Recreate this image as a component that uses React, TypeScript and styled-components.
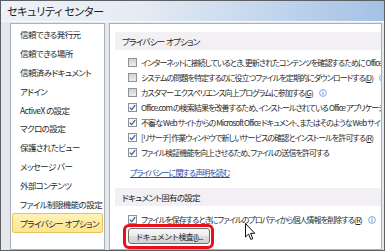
import React from 'react';
import styled, { createGlobalStyle, css } from 'styled-components';

const GlobalStyle = createGlobalStyle`
  html, body {
    margin: 0;
    padding: 0;
    background: #ffffff;
  }
  body {
    font-family: "Noto Sans CJK JP", "Noto Sans", sans-serif;
    font-feature-settings: "palt";
  }
`;

const Window = styled.div`
  width: 385px;
  height: 251px;
  box-sizing: border-box;
  border: 1px solid #5c5f64;
  display: flex;
  flex-direction: column;
  overflow: hidden;
  background: #e4e8ed;
`;

const TitleBar = styled.div`
  height: 20px;
  flex: none;
  display: flex;
  align-items: center;
  padding-left: 6px;
  background: linear-gradient(to right, #eef2f7 0%, #e6ecf4 35%, #c3d6ed 70%, #a4c1e4 100%);
  border-bottom: 1px solid #f7f9fc;
  font-size: 11px;
  letter-spacing: -0.3px;
  color: #1b1b1b;
`;

const Body = styled.div`
  flex: 1;
  min-height: 0;
  display: flex;
  gap: 4px;
  padding: 1px 0 0 9px;
`;

const NavList = styled.div`
  width: 95px;
  flex: none;
  box-sizing: border-box;
  border: 1px solid #aab1ba;
  background: #ffffff;
  padding: 1px 1px 0;
  display: flex;
  flex-direction: column;
`;

const NavItem = styled.div<{ $active?: boolean }>`
  height: 18.8px;
  flex: none;
  box-sizing: border-box;
  display: flex;
  align-items: center;
  padding-left: 8px;
  font-size: 8.5px;
  color: #2a2a2a;
  white-space: nowrap;
  letter-spacing: -0.6px;

  ${p => p.$active && css`
    height: 20px;
    padding-left: 7px;
    background: linear-gradient(#fef2b8, #fde48f);
    border: 1px solid #e6c35f;
    border-radius: 2px;
  `}
`;

const Content = styled.div`
  width: 273px;
  flex: none;
  box-sizing: border-box;
  border: 1px solid #aab1ba;
  background: #ffffff;
  padding-top: 8px;
  overflow: hidden;
  position: relative;
  display: flex;
  flex-direction: column;
`;

const SectionBand = styled.div<{ $top?: number }>`
  height: 18px;
  flex: none;
  margin: ${p => p.$top ?? 0}px 0 0 5px;
  padding-left: 7px;
  display: flex;
  align-items: center;
  background: #f3f0f4;
  font-size: 8.5px;
  letter-spacing: -0.7px;
  color: #1e1e1e;
  white-space: nowrap;
`;

const Options = styled.div<{ $top: number }>`
  display: flex;
  flex-direction: column;
  padding-left: 18px;
  margin-top: ${p => p.$top}px;
`;

const OptionRow = styled.div`
  height: 15px;
  flex: none;
  display: flex;
  align-items: center;
  gap: 4px;
  font-size: 8px;
  color: #2a2a2a;
  white-space: nowrap;
  letter-spacing: -0.9px;
`;

const Box = styled.span<{ $checked: boolean }>`
  width: 9px;
  height: 9px;
  flex: none;
  box-sizing: border-box;
  border: 1px solid #8f9194;
  display: flex;
  align-items: center;
  justify-content: center;
  background: ${p => (p.$checked
    ? 'linear-gradient(#f4f6f8, #ffffff)'
    : 'linear-gradient(#cfd1d4, #eceded)')};
`;

const InfoIcon = styled.svg`
  flex: none;
  margin-left: 2px;
`;

const Link = styled.a`
  height: 14px;
  margin: 5px 0 0 20px;
  display: flex;
  align-items: center;
  font-size: 8px;
  color: #1f4fa6;
  text-decoration: underline;
  white-space: nowrap;
  letter-spacing: -0.9px;
`;

const Highlight = styled.div`
  align-self: flex-start;
  display: flex;
  margin: -3px 0 0 13px;
  padding: 1px 1px 2px 2px;
  border: 3px solid #e5121b;
  border-radius: 6px;
`;

const Button = styled.button`
  width: 82px;
  height: 16px;
  padding: 0;
  box-sizing: border-box;
  border: 1px solid #707070;
  border-radius: 3px;
  background: linear-gradient(#f7f7f7 0%, #ececec 50%, #dcdcdc 51%, #d2d2d2 100%);
  font-family: inherit;
  font-size: 8px;
  color: #1e1e1e;
  letter-spacing: -0.8px;
  white-space: nowrap;
`;

const Cursor = styled.svg`
  position: absolute;
  left: 135px;
  top: 199px;
`;

const Check = () => (
  <svg width="7" height="7" viewBox="0 0 7 7">
    <path d="M0.8 3.6 L2.7 5.6 L6.2 1.2" fill="none" stroke="#3b5f9e" strokeWidth="1.3" />
  </svg>
);

const Info = () => (
  <InfoIcon width="8" height="8" viewBox="0 0 8 8">
    <circle cx="4" cy="4" r="3.4" fill="#ffffff" stroke="#6aa3e2" strokeWidth="0.9" />
    <rect x="3.55" y="1.6" width="0.9" height="0.9" fill="#4a86d0" />
    <rect x="3.55" y="3.2" width="0.9" height="3" fill="#4a86d0" />
  </InfoIcon>
);

interface Opt {
  checked: boolean;
  text: React.ReactNode;
  info?: boolean;
}

const privacyOptions: Opt[] = [
  { checked: false, text: <>インターネットに接続しているとき、更新されたコンテンツを確認するために Office.com に接続する(<u>I</u>)</> },
  { checked: false, text: <>システムの問題を特定するのに役立つファイルを定期的にダウンロードする(<u>D</u>)</>, info: true },
  { checked: false, text: <>カスタマー エクスペリエンス向上プログラムに参加する(<u>G</u>)</>, info: true },
  { checked: true, text: <>Office.com の検索結果を改善するため、インストールされている Office アプリケーションに関する情報を送信する(<u>F</u>)</> },
  { checked: true, text: <>不審な Web サイトからの Microsoft Office ドキュメント、またはそのような Web サイトにリンクしているドキュメントを確認する(<u>K</u>)</> },
  { checked: true, text: <>[リサーチ] 作業ウィンドウで新しいサービスの確認とインストールを許可する(<u>R</u>)</> },
  { checked: true, text: <>ファイル検証機能を向上させるため、ファイルの送信を許可する</> },
];

const navItems = [
  '信頼できる発行元',
  '信頼できる場所',
  '信頼済みドキュメント',
  'アドイン',
  'ActiveX の設定',
  'マクロの設定',
  '保護されたビュー',
  'メッセージ バー',
  '外部コンテンツ',
  'ファイル制限機能の設定',
  'プライバシー オプション',
];

const OptionLine: React.FC<Opt> = ({ checked, text, info }) => (
  <OptionRow>
    <Box $checked={checked}>{checked && <Check />}</Box>
    <span>{text}</span>
    {info && <Info />}
  </OptionRow>
);

export default function App() {
  return (
    <>
      <GlobalStyle />
      <Window>
        <TitleBar>セキュリティ センター</TitleBar>
        <Body>
          <NavList>
            {navItems.map(item => (
              <NavItem key={item} $active={item === 'プライバシー オプション'}>
                {item}
              </NavItem>
            ))}
          </NavList>

          <Content>
            <SectionBand>プライバシー オプション</SectionBand>
            <Options $top={5}>
              {privacyOptions.map((o, i) => (
                <OptionLine key={i} {...o} />
              ))}
            </Options>
            <Link>プライバシーに関する声明を読む</Link>

            <SectionBand $top={9}>ドキュメント固有の設定</SectionBand>
            <Options $top={6}>
              <OptionLine
                checked
                info
                text={<>ファイルを保存するときにファイルのプロパティから個人情報を削除する(<u>R</u>)</>}
              />
            </Options>
            <Highlight>
              <Button>ドキュメント検査(<u>I</u>)...</Button>
            </Highlight>

            <Cursor width="11" height="18" viewBox="0 0 11 18">
              <path
                d="M0.5 0.5 L0.5 14 L3.6 11 L5.8 16.5 L7.8 15.7 L5.6 10.3 L9.8 10.3 Z"
                fill="#ffffff"
                stroke="#111111"
                strokeWidth="1"
                strokeLinejoin="round"
              />
            </Cursor>
          </Content>
        </Body>
      </Window>
    </>
  );
}
